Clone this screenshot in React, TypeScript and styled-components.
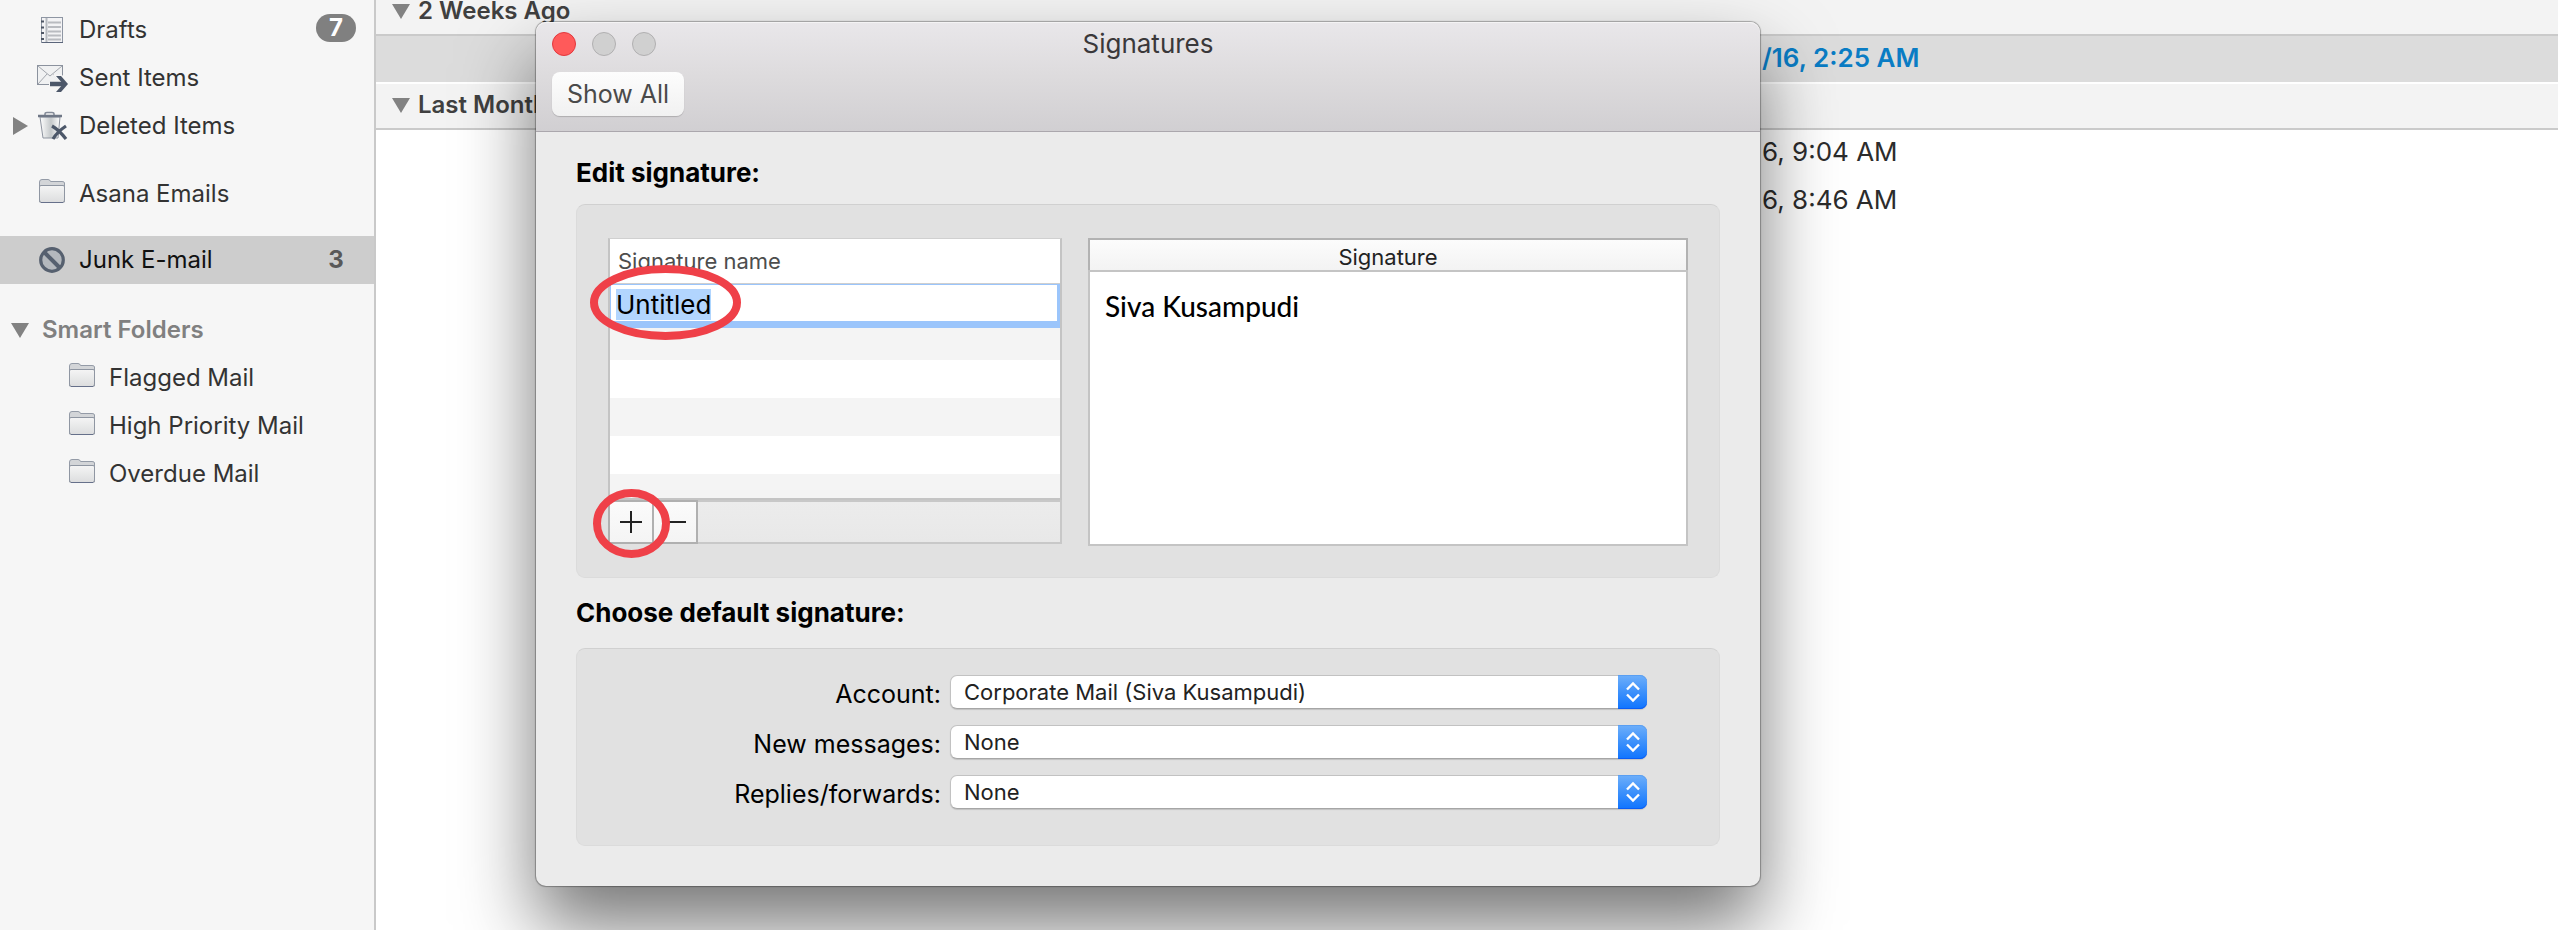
import React, { useEffect, useRef } from 'react';
import styled, { createGlobalStyle } from 'styled-components';

const GlobalStyle = createGlobalStyle`
  *, *::before, *::after { box-sizing: border-box; }
  html, body, #root { height: 100%; }
  body {
    margin: 0;
    overflow: hidden;
    background: #fff;
    color: #333;
    font-family: Inter, "Liberation Sans", sans-serif;
    font-size: 24px;
    line-height: 32px;
  }
  button, input, select, textarea { font: inherit; color: inherit; margin: 0; border-radius: 0; }
  h1, h2, p, ul { margin: 0; padding: 0; }
  ul { list-style: none; }
`;

const Screen = styled.div`
  position: relative;
  display: flex;
  min-height: 100%;
  overflow: hidden;
`;

/* ---------- Folder sidebar ---------- */

const Sidebar = styled.nav`
  position: relative;
  z-index: 2;
  flex: 0 0 376px;
  padding-top: 6px;
  background: #f6f6f6;
  border-right: 2px solid #c9c9c9;
`;

const FolderGroup = styled.ul<{ $gap?: number }>`
  margin-top: ${(p) => p.$gap ?? 0}px;
`;

const FolderRow = styled.li<{ $selected?: boolean }>`
  display: flex;
  align-items: center;
  height: 48px;
  padding-right: 18px;
  background: ${(p) => (p.$selected ? '#cdcdcd' : 'transparent')};
  color: ${(p) => (p.$selected ? '#111' : '#333')};
`;

const Disclosure = styled.span<{ $indent: number }>`
  display: flex;
  flex: 0 0 ${(p) => p.$indent}px;
  padding-left: 11px;
`;

const IconCell = styled.span`
  display: flex;
  flex: 0 0 42px;
`;

const FolderLink = styled.a`
  flex: 1;
  color: inherit;
  font-weight: 400;
  text-decoration: none;
`;

const GroupTitle = styled.span`
  color: #808080;
  font-weight: 600;
`;

const Count = styled.span<{ $pill?: boolean }>`
  width: 40px;
  height: 28px;
  margin-bottom: ${(p) => (p.$pill ? 4 : 0)}px;
  border-radius: 14px;
  background: ${(p) => (p.$pill ? '#808080' : 'transparent')};
  color: ${(p) => (p.$pill ? '#fff' : '#595959')};
  font-weight: 700;
  line-height: 28px;
  text-align: center;
`;

/* ---------- Message list ---------- */

const MessageList = styled.main`
  flex: 1;
  min-width: 0;
  margin-top: -10px;
`;

const SectionHeader = styled.h2`
  display: flex;
  align-items: center;
  gap: 8px;
  height: 46px;
  padding: 0 0 2px 16px;
  background: #f3f3f3;
  border-bottom: 2px solid #cacaca;
  color: #404040;
  font-size: 24px;
  font-weight: 600;
  line-height: 20px;
`;

const Message = styled.p<{ $selected?: boolean }>`
  height: 48px;
  padding-left: 1386px;
  background: ${(p) => (p.$selected ? '#dcdcdc' : '#fff')};
  border-bottom: 2px solid #fff;
  color: ${(p) => (p.$selected ? '#0a7cc4' : '#2c2c2c')};
  font-size: 26px;
  font-weight: ${(p) => (p.$selected ? 600 : 400)};
  line-height: 44px;
  white-space: nowrap;
`;

/* ---------- Signatures window ---------- */

const Window = styled.section`
  position: absolute;
  z-index: 1;
  top: 22px;
  left: 536px;
  width: 1224px;
  padding-bottom: 40px;
  border-radius: 10px;
  background: #ebebeb;
  box-shadow: 0 0 1px 1px rgba(0, 0, 0, 0.3), 0 40px 76px rgba(0, 0, 0, 0.54);
  color: #000;
  font-size: 25px;
`;

const TitleBar = styled.header`
  padding: 0 16px 15px;
  border-bottom: 1px solid #aba7ad;
  border-radius: 10px 10px 0 0;
  background: linear-gradient(#e9e7ea, #dddbdd 50%, #d1cfd2);
  box-shadow: inset 0 1px #f4f3f4;
`;

const TitleRow = styled.div`
  display: grid;
  grid-template-columns: 1fr auto 1fr;
  align-items: center;
  height: 44px;
  margin-bottom: 6px;
`;

const Lights = styled.div`
  display: flex;
  gap: 16px;
`;

const Light = styled.button<{ $close?: boolean }>`
  width: 24px;
  height: 24px;
  padding: 0;
  border: 1px solid ${(p) => (p.$close ? '#e2383d' : '#b1b0b1')};
  border-radius: 50%;
  background: ${(p) => (p.$close ? '#ff5a5a' : '#d0d0d0')};
`;

const Title = styled.h1`
  color: #3a383a;
  font-size: 26px;
  font-weight: 400;
`;

const ShowAll = styled.button`
  display: block;
  width: 132px;
  height: 44px;
  padding: 0;
  border: 0;
  border-radius: 8px;
  background: linear-gradient(#fdfdfd, #f1f1f1);
  box-shadow: 0 1px 1px rgba(0, 0, 0, 0.18);
  color: #4a4a4a;
  text-align: center;
`;

const Section = styled.section<{ $top: number; $gap: number }>`
  display: flex;
  flex-direction: column;
  gap: ${(p) => p.$gap}px;
  padding: ${(p) => p.$top}px 40px 0;
`;

const SectionTitle = styled.h2`
  font-size: 26px;
  font-weight: 700;
  line-height: 32px;
`;

const Well = styled.div`
  border: 1px solid #dbdbdb;
  border-top-color: #d0d0d0;
  border-radius: 9px;
  background: #e1e1e1;
`;

const EditWell = styled(Well)`
  display: flex;
  align-items: flex-start;
  gap: 26px;
  padding: 33px 31px 31px;
`;

const ListPane = styled.div`
  position: relative;
  flex: 0 0 454px;
`;

const NameTable = styled.table`
  width: 100%;
  border: 2px solid #c4c4c4;
  border-top: 1px solid #d0d0d0;
  border-spacing: 0;
  background: #fff;
`;

const NameHeading = styled.th`
  height: 45px;
  padding: 0 0 0 8px;
  border-bottom: 1px solid #cfcfcf;
  color: #4d4d4d;
  font-size: 22px;
  font-weight: 400;
  text-align: left;
`;

const NameCell = styled.td`
  height: 44px;
  padding: 0;
`;

const NameInput = styled.input`
  display: block;
  width: 100%;
  height: 44px;
  padding: 2px 5px 0;
  border: solid #9bc5fb;
  border-width: 1px 3px 7px 1px;
  outline: none;
  background: #fff;
  color: #000;
  font-size: 26px;
  line-height: 34px;
  &::selection { background: #b2d5fe; color: #000; }
`;

const StripeCell = styled.td<{ $height: number; $shaded?: boolean }>`
  height: ${(p) => p.$height}px;
  padding: 0;
  background: ${(p) => (p.$shaded ? '#f4f4f4' : '#fff')};
`;

const ButtonBar = styled.div`
  display: flex;
  height: 44px;
  border: 2px solid #c8c8c8;
  background: linear-gradient(#ececec, #e8e8e8);
`;

const BarButton = styled.button`
  display: flex;
  align-items: center;
  justify-content: center;
  width: 46px;
  height: 44px;
  margin: -2px 0 0 -2px;
  padding: 0;
  border: 2px solid #b0b0b0;
  background: linear-gradient(#fbfbfb, #f4f4f4);
`;

const Marker = styled.svg`
  position: absolute;
  top: 20px;
  left: -20px;
  overflow: visible;
  pointer-events: none;
`;

const PreviewPane = styled.div`
  display: flex;
  flex: 1;
  flex-direction: column;
  height: 308px;
`;

const PreviewLabel = styled.label`
  height: 32px;
  border: 2px solid #b2b2b2;
  border-bottom: 0;
  background: linear-gradient(#fcfcfc, #f3f3f3);
  color: #222;
  font-size: 22px;
  line-height: 34px;
  text-align: center;
`;

const PreviewText = styled.textarea`
  flex: 1;
  padding: 18px 15px;
  border: 2px solid #c4c4c4;
  outline: none;
  resize: none;
  background: #fff;
  color: #000;
  font-family: Lato, "Liberation Sans", sans-serif;
  font-size: 28px;
  font-weight: 500;
`;

const DefaultsWell = styled(Well)`
  display: flex;
  flex-direction: column;
  gap: 16px;
  padding: 26px 72px 36px 31px;
`;

const Field = styled.div`
  display: grid;
  grid-template-columns: 1fr 697px;
  grid-template-rows: 34px;
  align-items: center;
  gap: 9px;
`;

const FieldLabel = styled.label`
  padding-top: 4px;
  text-align: right;
`;

const SelectBox = styled.span`
  position: relative;
  display: block;
  height: 34px;
`;

const Select = styled.select`
  width: 100%;
  height: 34px;
  padding: 0 40px 0 13px;
  border: 1px solid #c2c2c2;
  border-bottom-color: #a6a6a6;
  border-radius: 7px;
  outline: none;
  appearance: none;
  background: #fff;
  box-shadow: 0 1px 1px rgba(0, 0, 0, 0.14);
  color: #222;
  font-size: 22px;
`;

const Stepper = styled.span`
  position: absolute;
  top: 0;
  right: 0;
  display: flex;
  align-items: center;
  justify-content: center;
  width: 29px;
  height: 34px;
  border-radius: 0 7px 7px 0;
  background: linear-gradient(#6eaffa, #3d91fb 50%, #0f74ff);
  box-shadow: inset 0 -1px #0a5cf5, inset 0 1px #5a9ff2;
  pointer-events: none;
`;

/* ---------- Drawings ---------- */

const Arrow = ({ right }: { right?: boolean }) =>
  right ? (
    <svg width="18" height="18" viewBox="0 0 18 18" aria-hidden="true"><path d="M2 0L17 9L2 18Z" fill="#828282" /></svg>
  ) : (
    <svg width="18" height="15" viewBox="0 0 18 15" aria-hidden="true"><path d="M0 0H18L9 15Z" fill="#828282" /></svg>
  );

const DraftsIcon = () => (
  <svg width="32" height="28" viewBox="0 0 32 28" aria-hidden="true">
    <rect x="4.500" y="1.500" width="21" height="25" fill="#f3f3f5" stroke="#8e96a3" />
    <path d="M5 26.500H26" stroke="#5a657a" />
    <path d="M9.500 2V26" stroke="#b5b9bf" strokeWidth="2" />
    <path d="M11 6.500H24M11 11H24M11 15.500H24M11 19.500H24M11 23.500H24" stroke="#b9bbc0" strokeWidth="1.800" />
    <path d="M4 5.500H7M4 11.500H7M4 17H7M4 23H7" stroke="#4d5564" strokeWidth="2" />
  </svg>
);

const SentIcon = () => (
  <svg width="32" height="28" viewBox="0 0 32 28" aria-hidden="true">
    <rect x="0.500" y="1.500" width="25" height="19" fill="#f0f1f2" stroke="#8b929e" />
    <path d="M1 2L13 12L25 2M1 20L10 10M25 20L16 10" fill="none" stroke="#a2a6ad" />
    <path d="M12 20H27M19 12H24L31 20L24 28H19L26 20Z" fill="none" stroke="#f6f6f6" strokeWidth="3" />
    <path d="M13 20H28" stroke="#4c5769" strokeWidth="4.500" />
    <path d="M19 12H24L31 20L24 28H19L26 20Z" fill="#4c5769" />
  </svg>
);

const TrashIcon = () => (
  <svg width="32" height="30" viewBox="0 0 32 30" aria-hidden="true">
    <defs>
      <linearGradient id="bin"><stop stopColor="#fff" /><stop offset="0.550" stopColor="#c4c8ca" /><stop offset="1" stopColor="#fff" /></linearGradient>
    </defs>
    <path d="M3 6H23L21 27H6Z" fill="url(#bin)" stroke="#8e949f" />
    <path d="M8 4V3Q8 1.500 10 1.500H15Q17 1.500 17 3V4" fill="none" stroke="#848b98" strokeWidth="1.500" />
    <path d="M1 5H25" stroke="#6f7786" strokeWidth="2.500" />
    <path d="M15 15Q22 19 29 28M29 15Q20 21 16 28" fill="none" stroke="#4c5769" strokeWidth="3.200" />
  </svg>
);

const FolderIcon = () => (
  <svg width="28" height="30" viewBox="0 0 28 30" aria-hidden="true">
    <defs>
      <linearGradient id="folder" x2="0" y2="1"><stop stopColor="#f5f5f5" /><stop offset="1" stopColor="#dcddde" /></linearGradient>
    </defs>
    <path d="M2.500 23V3Q2.500 0.500 5 0.500H11Q13 0.500 13.500 2.500H25Q27.500 2.500 27.500 4V23Z" fill="#d3d5d8" stroke="#949ba7" />
    <path d="M2.500 8Q2.500 6.500 4 6.500H26Q27.500 6.500 27.500 8V21Q27.500 23.500 25.500 23.500H4.500Q2.500 23.500 2.500 21Z" fill="url(#folder)" stroke="#8f96a2" />
    <path d="M4 23.500H26" stroke="#66708a" />
  </svg>
);

const JunkIcon = () => (
  <svg width="28" height="28" viewBox="0 0 28 28" aria-hidden="true">
    <circle cx="15" cy="14" r="11.300" fill="#b4b8bd" stroke="#56606f" strokeWidth="3.200" />
    <path d="M7 6L23 22" stroke="#56606f" strokeWidth="4" />
  </svg>
);

const Plus = () => (
  <svg width="22" height="22" viewBox="0 0 22 22" aria-hidden="true"><path d="M0 11H22M11 0V22" stroke="#222" strokeWidth="2" /></svg>
);

const Minus = () => (
  <svg width="22" height="22" viewBox="0 0 22 22" aria-hidden="true"><path d="M0 11H22" stroke="#222" strokeWidth="2" /></svg>
);

const Chevrons = () => (
  <svg width="14" height="22" viewBox="0 0 14 22" aria-hidden="true">
    <path d="M1 8.500L7 2.500L13 8.500M1 13.500L7 19.500L13 13.500" fill="none" stroke="#fff" strokeWidth="2.400" />
  </svg>
);

/* ---------- Composition ---------- */

interface FolderProps {
  name: string;
  icon: React.ReactNode;
  indent?: number;
  expandable?: boolean;
  selected?: boolean;
  count?: number;
  pill?: boolean;
}

const Folder = ({ name, icon, indent = 37, expandable, selected, count, pill }: FolderProps) => (
  <FolderRow $selected={selected}>
    <Disclosure $indent={indent}>{expandable && <Arrow right />}</Disclosure>
    <IconCell>{icon}</IconCell>
    <FolderLink href="#">{name}</FolderLink>
    {count !== undefined && <Count $pill={pill}>{count}</Count>}
  </FolderRow>
);

const Picker = ({ id, label, value }: { id: string; label: string; value: string }) => (
  <Field>
    <FieldLabel htmlFor={id}>{label}</FieldLabel>
    <SelectBox>
      <Select id={id}><option>{value}</option></Select>
      <Stepper><Chevrons /></Stepper>
    </SelectBox>
  </Field>
);

const stripes = [32, 38, 38, 38, 24];

export default function App() {
  const nameRef = useRef<HTMLInputElement>(null);

  useEffect(() => {
    nameRef.current?.focus();
    nameRef.current?.select();
  }, []);

  return (
    <>
      <GlobalStyle />
      <Screen>
        <Sidebar>
          <FolderGroup>
            <Folder name="Drafts" icon={<DraftsIcon />} count={7} pill />
            <Folder name="Sent Items" icon={<SentIcon />} />
            <Folder name="Deleted Items" icon={<TrashIcon />} expandable />
          </FolderGroup>
          <FolderGroup $gap={20}>
            <Folder name="Asana Emails" icon={<FolderIcon />} />
          </FolderGroup>
          <FolderGroup $gap={18}>
            <Folder name="Junk E-mail" icon={<JunkIcon />} selected count={3} />
          </FolderGroup>
          <FolderGroup $gap={22}>
            <FolderRow>
              <Disclosure $indent={42}><Arrow /></Disclosure>
              <GroupTitle>Smart Folders</GroupTitle>
            </FolderRow>
            <Folder name="Flagged Mail" icon={<FolderIcon />} indent={67} />
            <Folder name="High Priority Mail" icon={<FolderIcon />} indent={67} />
            <Folder name="Overdue Mail" icon={<FolderIcon />} indent={67} />
          </FolderGroup>
        </Sidebar>

        <MessageList>
          <SectionHeader><Arrow />2 Weeks Ago</SectionHeader>
          <Message $selected>/16, 2:25 AM</Message>
          <SectionHeader><Arrow />Last Month</SectionHeader>
          <Message>6, 9:04 AM</Message>
          <Message>6, 8:46 AM</Message>
        </MessageList>

        <Window aria-labelledby="window-title">
          <TitleBar>
            <TitleRow>
              <Lights>
                <Light $close aria-label="Close" />
                <Light aria-label="Minimize" disabled />
                <Light aria-label="Zoom" disabled />
              </Lights>
              <Title id="window-title">Signatures</Title>
            </TitleRow>
            <ShowAll>Show All</ShowAll>
          </TitleBar>

          <Section $top={25} $gap={15}>
            <SectionTitle>Edit signature:</SectionTitle>
            <EditWell>
              <ListPane>
                <NameTable>
                  <thead>
                    <tr><NameHeading scope="col" id="name-heading">Signature name</NameHeading></tr>
                  </thead>
                  <tbody>
                    <tr>
                      <NameCell>
                        <NameInput ref={nameRef} aria-labelledby="name-heading" defaultValue="Untitled" />
                      </NameCell>
                    </tr>
                    {stripes.map((height, i) => (
                      <tr key={i}><StripeCell $height={height} $shaded={i % 2 === 0} /></tr>
                    ))}
                  </tbody>
                </NameTable>
                <ButtonBar>
                  <BarButton aria-label="Add signature"><Plus /></BarButton>
                  <BarButton aria-label="Remove signature"><Minus /></BarButton>
                </ButtonBar>
                <Marker width="160" height="310" viewBox="0 0 160 310" aria-hidden="true">
                  <g fill="none" stroke="#ef4048" strokeWidth="8">
                    <ellipse cx="77.500" cy="44.500" rx="71.500" ry="33.500" />
                    <ellipse cx="43.500" cy="265.500" rx="34.500" ry="30.500" />
                  </g>
                </Marker>
              </ListPane>

              <PreviewPane>
                <PreviewLabel htmlFor="signature-text">Signature</PreviewLabel>
                <PreviewText id="signature-text" spellCheck={false} defaultValue="Siva Kusampudi" />
              </PreviewPane>
            </EditWell>
          </Section>

          <Section $top={19} $gap={19}>
            <SectionTitle>Choose default signature:</SectionTitle>
            <DefaultsWell>
              <Picker id="account" label="Account:" value="Corporate Mail (Siva Kusampudi)" />
              <Picker id="new-messages" label="New messages:" value="None" />
              <Picker id="replies" label="Replies/forwards:" value="None" />
            </DefaultsWell>
          </Section>
        </Window>
      </Screen>
    </>
  );
}
